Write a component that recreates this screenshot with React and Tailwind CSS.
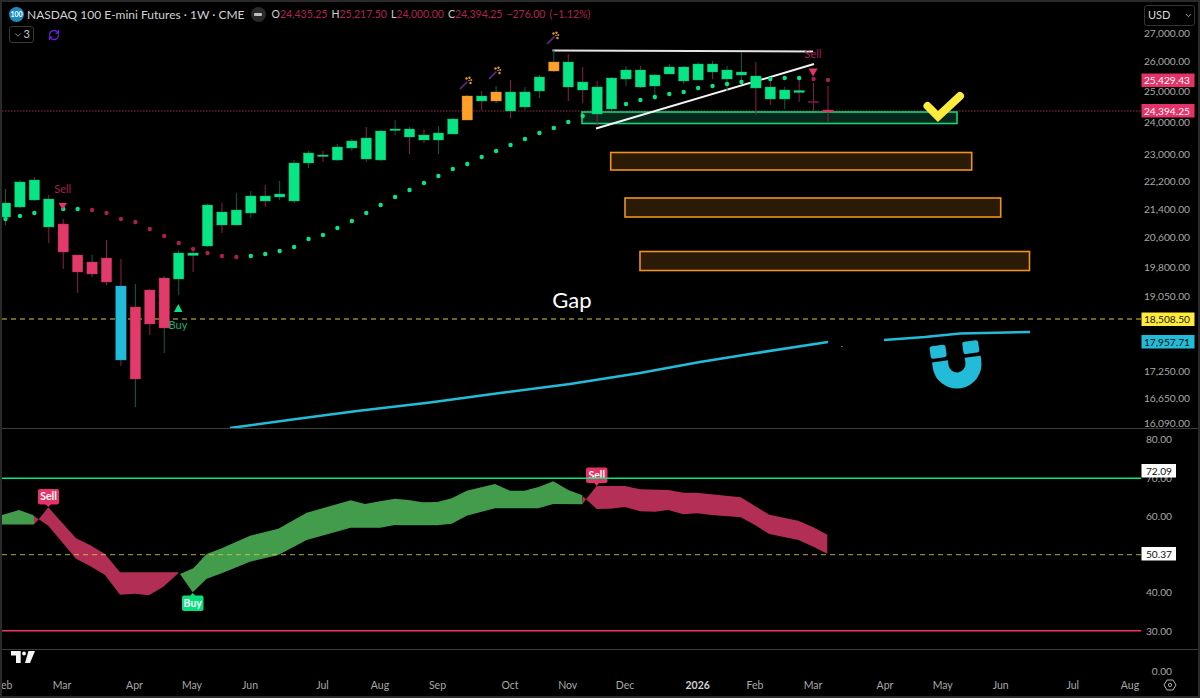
import React from 'react';
import { ChevronDown, RefreshCw } from 'lucide-react';

const bodyFill = { g: '#06e684', p: '#e23a6a', b: '#22bcd8', o: '#ffa028', m: '#8c1f48' };
const bodyEdge = { g: '#0aa968', p: '#b92c57', b: '#1a94ab', o: '#d98820', m: '#8c1f48' };
const wickFill = { t: '#0c5f4c', r: '#8c1f48' };

// top, bottom, wick top, wick bottom, body colour, wick colour
const candles = [
  [203, 217, 189, 225, 'g', 't'], [182, 207, 180, 208, 'g', 't'], [180, 200, 177, 201, 'g', 'r'],
  [199, 227, 195, 243, 'g', 'r'], [224, 252, 219, 269, 'p', 'r'], [255, 272, 255, 293, 'p', 'r'],
  [262, 274, 255, 277, 'p', 't'], [258, 282, 240, 285, 'p', 'r'], [286, 360, 259, 366, 'b', 'r'],
  [307, 379, 284, 407, 'p', 't'], [290, 324, 289, 335, 'p', 'r'], [278, 328, 276, 353, 'p', 't'],
  [253, 279, 250, 295, 'g', 't'], [253, 255.5, 248, 272, 'g', 'r'], [205, 246, 204, 247, 'g', 't'],
  [212, 225, 203, 233, 'g', 'r'], [210, 225, 193, 225, 'g', 't'], [196, 213, 191, 218, 'g', 't'],
  [196, 201, 185, 207, 'g', 'r'], [194, 197, 181, 200, 'g', 't'], [163, 201, 160, 203, 'g', 't'],
  [153, 163, 151, 168, 'g', 't'], [155, 156.5, 151, 162, 'g', 'r'], [147, 160, 144, 161, 'g', 't'],
  [141, 148, 139, 151, 'g', 't'], [138, 159, 127, 162, 'g', 'r'], [131, 160, 130, 161, 'g', 't'],
  [129, 130.5, 120, 135, 'g', 't'], [129, 137, 127, 154, 'g', 'r'], [135, 140, 129, 143, 'g', 'r'],
  [133, 140, 126, 154, 'g', 't'], [119, 134, 118, 134, 'g', 't'], [96, 120, 95, 120, 'o', 't'],
  [96, 101, 91, 110, 'g', 'r'], [92, 101, 86, 103, 'o', 't'], [92, 111, 80, 118, 'g', 'r'],
  [92, 107, 87, 110, 'g', 't'], [77, 91, 75, 98, 'g', 't'], [62, 71, 50, 72, 'o', 't'],
  [62, 87, 54, 101, 'g', 'r'], [82, 90, 67, 103, 'g', 'r'], [87, 114, 81, 126, 'g', 'r'],
  [78, 109, 77, 111, 'g', 'r'], [70, 79, 66, 86, 'g', 't'], [70, 87, 66, 88, 'g', 'r'],
  [75, 86, 74, 100, 'g', 't'], [67, 74, 64, 74, 'g', 't'], [67, 81, 66, 84, 'g', 'r'],
  [64, 80, 62, 80, 'g', 't'], [64, 72, 61, 79, 'g', 'r'], [70, 79, 66, 91, 'g', 't'],
  [72, 75, 52, 82, 'g', 't'], [76, 88, 62, 115, 'g', 'r'], [87, 99, 77, 105, 'g', 'r'],
  [90, 99, 87, 109, 'g', 't'], [90.5, 92.5, 77, 102, 'g', 'r'], [101.5, 102.5, 83, 111, 'm', 'r'],
  [110, 112, 86, 123, 'p', 'r'],
];

// supertrend dots by candle index
const dots = [
  [0, 219, 'g'], [1, 216, 'g'], [2, 213, 'g'], [4, 209, 'g'], [5, 209, 'g'], [6, 210, 'r'], [7, 213, 'r'],
  [8, 219, 'r'], [9, 222, 'r'], [10, 229, 'r'], [11, 236, 'r'], [12, 243, 'r'], [13, 249, 'r'], [14, 253, 'r'],
  [15, 256, 'r'], [16, 257, 'r'], [17, 256, 'g'], [18, 254, 'g'], [19, 251, 'g'], [20, 247, 'g'], [21, 239, 'g'],
  [22, 235, 'g'], [23, 228, 'g'], [24, 221, 'g'], [25, 213, 'g'], [26, 205, 'g'], [27, 197, 'g'], [28, 190, 'g'],
  [29, 183, 'g'], [30, 176, 'g'], [31, 169, 'g'], [32, 164, 'g'], [33, 157, 'g'], [34, 151, 'g'], [35, 145, 'g'],
  [36, 139, 'g'], [37, 133, 'g'], [38, 128, 'g'], [39, 122, 'g'], [40, 116, 'g'], [43, 104, 'g'], [44, 100, 'g'],
  [45, 97, 'g'], [46, 94, 'g'], [47, 92, 'g'], [48, 88, 'g'], [49, 86, 'g'], [50, 84, 'g'], [51, 82, 'g'],
  [53, 79, 'g'], [54, 78, 'g'], [55, 78, 'g'], [56, 79, 'r'], [57, 80, 'r'],
];

const cx = (i) => 5.5 + i * 14.43;

const priceLabels = [
  ['27,000.00', 33], ['26,000.00', 61], ['25,000.00', 91], ['24,000.00', 122], ['23,000.00', 154],
  ['22,200.00', 181], ['21,400.00', 209], ['20,600.00', 237], ['19,800.00', 267], ['19,050.00', 296],
  ['17,250.00', 371.5], ['16,650.00', 398], ['16,090.00', 423.5],
];

const priceTags = [
  ['25,429.43', 73.5, '#e5336a', '#ffffff'], ['24,394.25', 104, '#e5336a', '#ffffff'],
  ['18,508.50', 312.5, '#ffeb3b', '#1a1a1a'], ['17,957.71', 335, '#22bcd8', '#0a0a0a'],
];

const timeLabels = [
  ['Feb', 4], ['Mar', 62], ['Apr', 134.5], ['May', 192], ['Jun', 250], ['Jul', 322.5], ['Aug', 380], ['Sep', 437.5],
  ['Oct', 510], ['Nov', 567.7], ['Dec', 625], ['Feb', 755], ['Mar', 813], ['Apr', 885], ['May', 942.7], ['Jun', 1000.7],
  ['Jul', 1072.7], ['Aug', 1130],
];

const Wand = ({ x, y }) => (
  <g>
    <line x1={x} y1={y + 12} x2={x + 7.5} y2={y + 4.5} stroke="#5e2a86" strokeWidth="1.7" />
    <circle cx={x + 6.5} cy={y + 1.5} r="1.2" fill="#e8962a" />
    <circle cx={x + 9.5} cy={y + 0.8} r="1.2" fill="#e8962a" />
    <circle cx={x + 11.3} cy={y + 3} r="1.1" fill="#c98a30" />
    <circle cx={x + 10.5} cy={y + 6} r="1.2" fill="#e8962a" />
    <circle cx={x + 9} cy={y + 3.5} r="0.7" fill="#b8b8b8" />
  </g>
);

const Candles = () => candles.map(([top, bottom, wt, wb, body, wick], i) => (
  <g key={i}>
    <line x1={cx(i)} x2={cx(i)} y1={wt} y2={wb} stroke={wickFill[wick]} strokeWidth="1" />
    <rect x={Math.max(cx(i) - 5.2, 2)} y={top} width={i === 0 ? 8.7 : 10.4} height={bottom - top} fill={bodyFill[body]} stroke={bodyEdge[body]} strokeWidth="0.4" />
  </g>
));

const MainChart = () => (
  <svg viewBox="2 2 1139 426" className="w-[1139px] h-[426px] shrink-0 font-['Lato',sans-serif]">
    <line x1="2" x2="1141" y1="111" y2="111" stroke="#a02850" strokeDasharray="1.5 1.5" />
    <line x1="2" x2="1141" y1="319" y2="319" stroke="#d8cc3c" strokeWidth="1.2" strokeDasharray="5 4" />

    <rect x="582" y="112" width="375" height="11.5" fill="#06281b" stroke="#13d47f" strokeWidth="1.6" />
    <rect x="610.7" y="152.5" width="361" height="17.5" fill="#2b1a06" stroke="#f0921c" strokeWidth="1.6" />
    <rect x="625" y="198" width="375.7" height="19" fill="#2b1a06" stroke="#f0921c" strokeWidth="1.6" />
    <rect x="640" y="251.5" width="389.5" height="19" fill="#2b1a06" stroke="#f0921c" strokeWidth="1.6" />

    <polyline points="230,428 300,418.5 357,411 430,402.5 500,393 570,384 640,373 700,362 750,354 828,342" fill="none" stroke="#22bcd8" strokeWidth="2.6" />
    <polyline points="884,340 925,337 960,333.5 1030,332" fill="none" stroke="#22bcd8" strokeWidth="2.6" />
    <rect x="841" y="346" width="1.5" height="1" fill="#a07020" />

    <line x1="552.5" y1="50.5" x2="813" y2="51.5" stroke="#e4e4e4" strokeWidth="1.9" />
    <line x1="596" y1="128.5" x2="814" y2="64" stroke="#f4f4f4" strokeWidth="1.9" />

    <Candles />
    {dots.map(([i, y, c]) => (
      <circle key={i} cx={cx(i)} cy={y} r="2.2" fill={c === 'g' ? '#06e684' : '#a81f50'} />
    ))}

    <Wand x={460} y={77} />
    <Wand x={489} y={67} />
    <Wand x={547} y={32} />

    <polygon points="58.5,203 67,203 62.7,209.5" fill="#e5336a" />
    <polygon points="808.7,68.5 817.5,68.5 813,76.5" fill="#e5336a" />
    <polygon points="174,312 182.5,312 178.3,304" fill="#06e684" />
    <text x="62.7" y="193" textAnchor="middle" className="text-[11px] fill-[#a81f50]">Sell</text>
    <text x="813" y="58" textAnchor="middle" className="text-[11px] fill-[#a81f50]">Sell</text>
    <text x="178" y="329" textAnchor="middle" className="text-[11px] fill-[#0fb070]">Buy</text>

    <text x="572" y="308" textAnchor="middle" className="text-[22px] fill-white">Gap</text>

    <polyline points="927.5,106 938,116.5 960,96" fill="none" stroke="#ffeb3b" strokeWidth="8" strokeLinejoin="miter" strokeLinecap="round" />

    {/* magnet */}
    <g fill="#22bcd8" transform="rotate(-8 957 364)">
      <path d="M940.5 359 V364 A16.5 16.5 0 0 0 973.5 364 V359" fill="none" stroke="#22bcd8" strokeWidth="16" />
      <rect x="932" y="343" width="16" height="12.5" rx="2.5" />
      <rect x="965" y="343" width="16" height="12.5" rx="2.5" />
    </g>
  </svg>
);

const PriceAxis = () => (
  <svg viewBox="1141 2 57 426" className="w-[57px] h-[426px] shrink-0 font-['Lato',sans-serif]">
    {priceLabels.map(([t, y]) => (
      <text key={t} x="1190" y={y + 3.5} textAnchor="end" className="text-[10.2px] fill-[#a8a8a8]">{t}</text>
    ))}
    {priceTags.map(([t, y, bg, fg]) => (
      <g key={t}>
        <rect x="1141.5" y={y} width="53" height="13.5" fill={bg} />
        <text x="1190" y={y + 10.5} textAnchor="end" className="text-[10.2px]" fill={fg}>{t}</text>
      </g>
    ))}
  </svg>
);

const Flag = ({ x, y, w, h, fill, tip, text }) => (
  <g>
    <rect x={x} y={y} width={w} height={h} rx="2" fill={fill} />
    <polygon points={tip} fill={fill} />
    <text x={x + w / 2} y={y + 11} textAnchor="middle" className="text-[10.5px] font-bold fill-white">{text}</text>
  </g>
);

const OscChart = () => (
  <svg viewBox="2 429 1139 220" className="w-[1139px] h-[220px] shrink-0 font-['Lato',sans-serif]">
    <polygon points="2,515 19,510 33,515 34,516 34,524.5 2,524.5" fill="#439c4b" />
    <polygon points="34,516 38.7,519.3 34,524.5" fill="#b22e55" />
    <polygon fill="#b22e55" points="38.7,519.3 48.3,507.3 76,538.3 90,545 105,554 120,572.3 178.3,572.3 178.3,573.3 163.3,586.7 149,595.3 135,593.7 120,594.7 105,575 90,566 76,558.7 48.3,525.7" />
    <polygon fill="#439c4b" points="180,574 193.3,568.3 206.7,554 221.7,548.3 250,535.7 278.3,528.7 306.7,512.7 350.7,500.3 365,504 380,501.3 395,498.7 400,499.3 408.3,500 422.7,502.3 437.3,502 451.7,498.3 466.7,490.7 495,484 510,490.7 524.3,490.7 539.3,486.7 553.3,481.3 568.3,490 582.3,495.3 582.7,504.3 553.3,504 538.3,508.3 495,508.3 466.7,515.7 451.7,523.7 437.3,525.3 400,525.3 395,525 380,527.7 350.7,527.7 306.7,540 278.3,555 250,561.7 221.7,573.3 206.7,578.7 192.7,592.3" />
    <polygon points="582.7,496 586,499.3 582.7,504" fill="#b22e55" />
    <polygon fill="#b22e55" points="586,499.3 596.7,486 625,486 640,489.3 668.3,490 683.3,492.7 696.7,492.7 740.7,497.3 755,506 769.3,514.7 798.3,520.7 813.3,527.3 827.3,534.7 827.3,553.7 813.3,546.7 798.3,540 769.3,534 755,525 740.7,517.3 711.7,515 696.7,513.3 683.3,514.3 668.3,510 655,511.7 640,511.3 625,507 610,508.7 596.7,509" />

    <line x1="2" x2="1141" y1="554.7" y2="554.7" stroke="#d8cc3c" strokeOpacity="0.65" strokeWidth="1.2" strokeDasharray="5 4" />

    <Flag x={38} y={489} w={21} h={15.5} fill="#e5336a" tip="45.5,504 51,504 48.3,507" text="Sell" />
    <Flag x={182} y={595.5} w={21.5} h={15.5} fill="#06e07c" tip="190,596 195.5,596 192.7,593" text="Buy" />
    <Flag x={586} y={467.5} w={21.5} h={15.5} fill="#e5336a" tip="594,482.5 599.5,482.5 596.7,486" text="Sell" />

    <line x1="2" x2="1141" y1="478.3" y2="478.3" stroke="#06e684" strokeWidth="1.4" />
    <line x1="2" x2="1141" y1="630.7" y2="630.7" stroke="#f23368" strokeWidth="1.4" />
  </svg>
);

const OscAxis = () => (
  <svg viewBox="1141 429 57 220" className="w-[57px] h-[220px] shrink-0 font-['Lato',sans-serif]">
    {[['80.00', 439.5], ['70.00', 478], ['60.00', 516], ['40.00', 592.7], ['30.00', 631]].map(([t, y]) => (
      <text key={t} x="1172" y={y + 3.5} textAnchor="end" className="text-[10.2px] fill-[#a8a8a8]">{t}</text>
    ))}
    {[['72.09', 464], ['50.37', 547]].map(([t, y]) => (
      <g key={t}>
        <rect x="1141.5" y={y} width="34.5" height="13.5" fill="#ffffff" />
        <text x="1172" y={y + 10.5} textAnchor="end" className="text-[10.2px] fill-[#111]">{t}</text>
      </g>
    ))}
  </svg>
);

const TimeAxis = () => (
  <svg viewBox="2 650 1196 46" className="w-[1196px] h-[46px] shrink-0 font-['Lato',sans-serif]">
    <text x="1172" y="675" textAnchor="end" className="text-[10.2px] fill-[#a8a8a8]">0.00</text>
    <rect x="1141" y="675" width="59" height="21" fill="#000" />

    {/* tradingview mark */}
    <path d="M11 651 H20.7 V663 H16 V655.5 H11 Z" fill="#f4f4f4" />
    <circle cx="24" cy="653.5" r="1.9" fill="#f4f4f4" />
    <path d="M28.5 651 H35 L30 663 H25 Z" fill="#f4f4f4" />

    {timeLabels.map(([t, x]) => (
      <text key={t + x} x={x} y="689" textAnchor="middle" className="text-[10.5px] fill-[#a8a8a8]">{t}</text>
    ))}
    <text x="697.7" y="689" textAnchor="middle" className="text-[10.5px] font-bold fill-[#d0d0d0]">2026</text>

    <polygon points="1164,685 1167,680 1173,680 1176,685 1173,690 1167,690" fill="none" stroke="#b0b0b0" strokeWidth="1" />
    <circle cx="1170" cy="685" r="1.6" fill="none" stroke="#b0b0b0" strokeWidth="1" />
  </svg>
);

const Ohlc = ({ k, v }) => (
  <span className="mr-[4px]">
    <span className="text-[#cfcfcf]">{k}</span>
    <span className="text-[#b3224f]">{v}</span>
  </span>
);

export default function App() {
  return (
    <div className="relative w-[1200px] h-[698px] bg-black border-2 border-[#2a2a2a] flex flex-col overflow-hidden font-['Lato',sans-serif]">
      <div className="flex h-[426px] shrink-0">
        <MainChart />
        <PriceAxis />
      </div>
      <div className="h-px shrink-0 bg-[#3c3c3c]" />
      <div className="flex h-[220px] shrink-0">
        <OscChart />
        <OscAxis />
      </div>
      <div className="h-px shrink-0 bg-[#3c3c3c]" />
      <TimeAxis />

      {/* legend */}
      <div className="absolute left-[7px] top-[4px] flex flex-col gap-[3px]">
        <div className="flex items-center h-[17px] text-[12px] text-[#d1d1d1] whitespace-nowrap">
          <div className="flex items-center justify-center w-[15px] h-[15px] rounded-full bg-[#1a8cc1] text-white text-[7px] font-bold mr-[3px]">100</div>
          <span>NASDAQ 100 E-mini Futures · 1W · CME</span>
          <div className="flex items-center justify-center w-[15px] h-[15px] rounded-full bg-[#2a2a2a] ml-[6px] mr-[6px]">
            <div className="w-[8px] h-[3px] rounded-[1px] bg-[#bdbdbd]" />
          </div>
          <div className="text-[10.5px]">
            <Ohlc k="O" v="24,435.25" />
            <Ohlc k="H" v="25,217.50" />
            <Ohlc k="L" v="24,000.00" />
            <Ohlc k="C" v="24,394.25" />
            <span className="text-[#b3224f] mr-[4px]">−276.00</span>
            <span className="text-[#b3224f]">(−1.12%)</span>
          </div>
        </div>
        <div className="flex items-center gap-[14px]">
          <div className="flex items-center justify-between w-[25px] h-[17px] px-[3px] rounded-[3px] border border-[#3a3a3a] text-[11px] text-[#c8c8c8]">
            <ChevronDown size={10} strokeWidth={1.6} />
            <span>3</span>
          </div>
          <RefreshCw size={12} strokeWidth={2.6} className="text-[#6a22e0]" />
        </div>
      </div>

      {/* currency */}
      <div className="absolute right-[3px] top-[3px] flex items-center justify-between w-[51px] h-[21px] pl-[3px] pr-[1px] rounded-[3px] border border-[#333] text-[11px] text-[#d8d8d8]">
        <span>USD</span>
        <ChevronDown size={9} strokeWidth={2} />
      </div>
    </div>
  );
}
